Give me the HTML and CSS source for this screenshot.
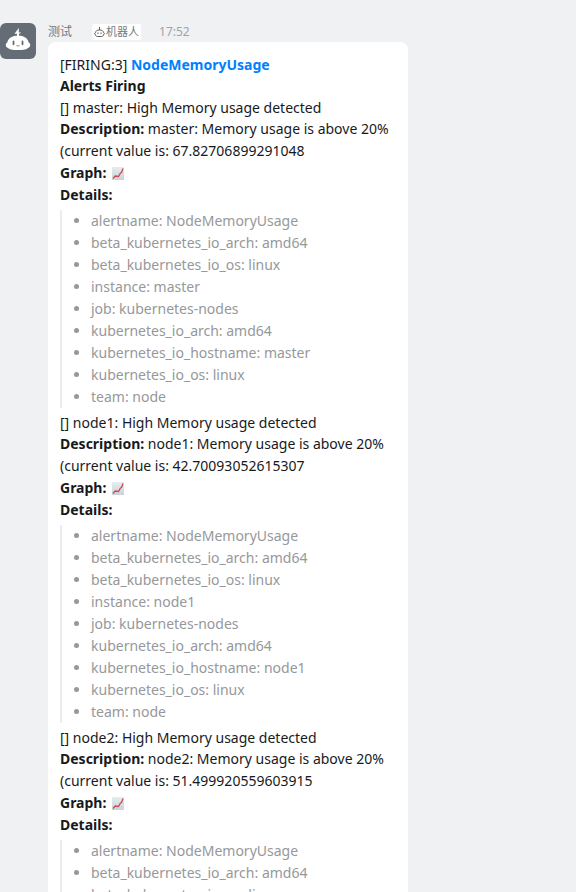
FILE: index.html
```html
<!DOCTYPE html>
<html lang="zh-CN">
<head>
<meta charset="utf-8">
<meta name="viewport" content="width=device-width, initial-scale=1">
<title>测试</title>
<link rel="stylesheet" href="styles.css">
</head>
<body>
<svg class="defs" width="0" height="0" aria-hidden="true">
  <defs>
    <linearGradient id="paper" x1="0" y1="0" x2="0" y2="1">
      <stop offset="0" stop-color="#e6edf0"/>
      <stop offset="1" stop-color="#c9d3da"/>
    </linearGradient>
    <symbol id="chart" viewBox="0 0 12 13">
      <rect width="12" height="13" fill="url(#paper)"/>
      <path d="M1 11.500 3.200 9 6.500 9.500 8.500 6 9.500 5.500 11 1.500" fill="none" stroke="#cf4a50" stroke-width="1.300"/>
    </symbol>
  </defs>
</svg>
<main class="message">
  <div class="avatar">
    <svg width="36" height="36" viewBox="0 0 36 36" aria-hidden="true">
      <path d="M18.800 5 14.500 10.700h2.500V14h2V11l2.200-1.500H18.800z" fill="#fff"/>
      <path d="M18 12.500c-6 0-10 3-10.700 7-1.900.4-2.200 4.700.3 5.200C9.200 26.500 12 27 18 27s8.800-.5 10.400-2.300c2.500-.5 2.200-4.800.3-5.200C28 15.500 24 12.500 18 12.500z" fill="#fff"/>
      <path d="M13.500 18.500v2.800M22.500 18.500v2.800" stroke="#646c75" stroke-width="1.800" stroke-linecap="round"/>
      <path d="M16.500 22.800h3" fill="none" stroke="#646c75" stroke-width=".8"/>
    </svg>
  </div>
  <div class="content">
    <header class="meta">
      <span class="sender">测试</span>
      <span class="badge">
        <svg width="11" height="10" viewBox="0 0 11 10" fill="none" stroke="#5c5c5c" aria-hidden="true">
          <path d="M5.500 0v3M5.500 3C3 3 1.700 4 1.600 5.500.3 5.700.3 7.500 1.600 7.700c.1 1.200.8 1.800 1.900 1.800h4c1.100 0 1.800-.6 1.900-1.800 1.300-.2 1.300-2 0-2.200C9.300 4 8 3 5.500 3zM4 5.500v1.500M7 5.500v1.500"/>
        </svg>
        机器人
      </span>
      <time class="time">17:52</time>
    </header>
    <article class="bubble">
      <p class="line summary">[FIRING:3] <a class="link" href="#">NodeMemoryUsage</a></p>
      <p class="line"><strong>Alerts Firing</strong></p>

      <p class="line summary">[] master: High Memory usage detected</p>
      <p class="line"><strong>Description:</strong> master: Memory usage is above 20%</p>
      <p class="line">(current value is: 67.82706899291048</p>
      <p class="line"><strong>Graph:</strong> <svg class="chart" width="12" height="13" role="img" aria-label="chart"><use href="#chart"/></svg></p>
      <p class="line"><strong>Details:</strong></p>
      <ul class="details">
        <li>alertname: NodeMemoryUsage</li>
        <li>beta_kubernetes_io_arch: amd64</li>
        <li>beta_kubernetes_io_os: linux</li>
        <li>instance: master</li>
        <li>job: kubernetes-nodes</li>
        <li>kubernetes_io_arch: amd64</li>
        <li>kubernetes_io_hostname: master</li>
        <li>kubernetes_io_os: linux</li>
        <li>team: node</li>
      </ul>

      <p class="line summary">[] node1: High Memory usage detected</p>
      <p class="line"><strong>Description:</strong> node1: Memory usage is above 20%</p>
      <p class="line">(current value is: 42.70093052615307</p>
      <p class="line"><strong>Graph:</strong> <svg class="chart" width="12" height="13" role="img" aria-label="chart"><use href="#chart"/></svg></p>
      <p class="line"><strong>Details:</strong></p>
      <ul class="details">
        <li>alertname: NodeMemoryUsage</li>
        <li>beta_kubernetes_io_arch: amd64</li>
        <li>beta_kubernetes_io_os: linux</li>
        <li>instance: node1</li>
        <li>job: kubernetes-nodes</li>
        <li>kubernetes_io_arch: amd64</li>
        <li>kubernetes_io_hostname: node1</li>
        <li>kubernetes_io_os: linux</li>
        <li>team: node</li>
      </ul>

      <p class="line summary">[] node2: High Memory usage detected</p>
      <p class="line"><strong>Description:</strong> node2: Memory usage is above 20%</p>
      <p class="line">(current value is: 51.499920559603915</p>
      <p class="line"><strong>Graph:</strong> <svg class="chart" width="12" height="13" role="img" aria-label="chart"><use href="#chart"/></svg></p>
      <p class="line"><strong>Details:</strong></p>
      <ul class="details">
        <li>alertname: NodeMemoryUsage</li>
        <li>beta_kubernetes_io_arch: amd64</li>
        <li>beta_kubernetes_io_os: linux</li>
      </ul>
    </article>
  </div>
</main>
</body>
</html>
```
FILE: styles.css
```css
* {
  box-sizing: border-box;
}

html,
body {
  height: 100%;
}

body {
  margin: 0;
  overflow: hidden;
  background: #f0f1f3;
  color: #171a1d;
  font-family: "Noto Sans", "Noto Sans CJK SC", sans-serif;
  font-size: 14px;
  line-height: 22px;
}

.defs {
  position: absolute;
}

.message {
  display: flex;
  align-items: flex-start;
  gap: 12px;
  padding-top: 23px;
}

.avatar {
  flex: none;
  width: 36px;
  height: 36px;
  border-radius: 6px;
  background: #646c75;
}

.avatar svg {
  display: block;
}

.content {
  flex: 0 1 360px;
  min-width: 0;
}

.meta {
  display: flex;
  align-items: center;
  height: 19px;
  padding-bottom: 2px;
  color: #74787c;
  font-size: 12px;
  line-height: 16px;
}

.badge {
  display: flex;
  align-items: center;
  gap: 1px;
  height: 16px;
  margin: 0 18px 0 20px;
  padding: 0 2px;
  border-radius: 2px;
  background: #fff;
  font-size: 11px;
}

.time {
  color: #a0a3a6;
}

.bubble {
  padding: 12px;
  border-radius: 8px;
  background: #fff;
}

.line {
  margin: 0;
}

.summary {
  line-height: 21px;
}

.link {
  color: #007fff;
  font-weight: 700;
  text-decoration: none;
}

.chart {
  margin-left: 2px;
  vertical-align: -2px;
}

.details {
  margin: 4px 0;
  padding: 0 0 0 29px;
  border-left: 2px solid #ebecee;
  color: #96989a;
}
```
